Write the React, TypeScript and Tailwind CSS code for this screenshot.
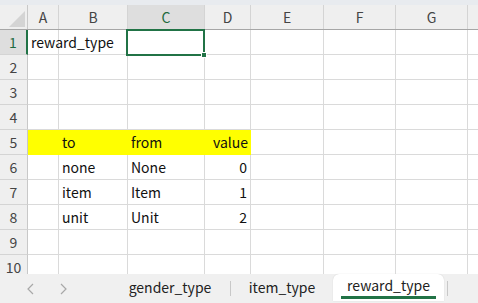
import React from 'react';

const font = { fontFamily: '"Noto Sans CJK JP", "Noto Sans", sans-serif' };

// column widths include the 1px right gridline
const cols = [
  { key: 'A', w: 'w-[31px]' },
  { key: 'B', w: 'w-[69px]' },
  { key: 'C', w: 'w-[77px]' },
  { key: 'D', w: 'w-[46px]' },
  { key: 'E', w: 'w-[73px]' },
  { key: 'F', w: 'w-[72px]' },
  { key: 'G', w: 'w-[72px]' },
];

type Cell = { text?: string; right?: boolean };

const rows: { n: number; yellow?: boolean; cells: Record<string, Cell> }[] = [
  { n: 1, cells: { A: { text: 'reward_type' } } },
  { n: 2, cells: {} },
  { n: 3, cells: {} },
  { n: 4, cells: {} },
  { n: 5, yellow: true, cells: { B: { text: 'to' }, C: { text: 'from' }, D: { text: 'value', right: true } } },
  { n: 6, cells: { B: { text: 'none' }, C: { text: 'None' }, D: { text: '0', right: true } } },
  { n: 7, cells: { B: { text: 'item' }, C: { text: 'Item' }, D: { text: '1', right: true } } },
  { n: 8, cells: { B: { text: 'unit' }, C: { text: 'Unit' }, D: { text: '2', right: true } } },
  { n: 9, cells: {} },
  { n: 10, cells: {} },
];

function ColumnHeader() {
  return (
    <div className="flex h-[25px] border-b border-[#a6a6a6] bg-[#efefef]">
      <div className="relative w-[28px] shrink-0 border-r border-[#c8c8c8]">
        <svg className="absolute left-0 top-0" width="27" height="24">
          <polygon points="25,6 25,22 9,22" fill="#d4d4d4" />
        </svg>
      </div>
      {cols.map((c) => (
        <div
          key={c.key}
          className={`${c.w} shrink-0 flex items-center justify-center border-r border-[#d4d4d4] text-[14px] ${
            c.key === 'C' ? 'bg-[#dedede] text-[#1e6b3f]' : 'text-[#444]'
          }`}
        >
          {c.key}
        </div>
      ))}
      <div className="flex-1" />
    </div>
  );
}

function Row({ row }: { row: (typeof rows)[number] }) {
  const sel = row.n === 1;
  return (
    <div className="flex h-[25px] shrink-0">
      <div
        className={`w-[28px] shrink-0 flex items-center justify-center text-[14px] border-b border-[#d4d4d4] ${
          sel ? 'bg-[#dedede] text-[#1e6b3f] border-r-2 border-r-[#217346]' : 'bg-[#efefef] text-[#444] border-r border-r-[#c8c8c8]'
        }`}
      >
        {row.n}
      </div>
      {cols.map((c, i) => {
        const cell = row.cells[c.key];
        const yellow = row.yellow && i < 4;
        return (
          <div
            key={c.key}
            className={`${c.w} shrink-0 flex items-center text-[14px] text-[#111] whitespace-nowrap ${
              yellow ? 'bg-[#ffff00]' : 'border-r border-b border-[#dadada]'
            } ${cell?.right ? 'justify-end pr-[3px]' : 'pl-[3px]'} ${c.key === 'A' ? 'overflow-visible' : 'overflow-hidden'}`}
          >
            {cell?.text}
          </div>
        );
      })}
      <div className="flex-1 border-b border-[#dadada]" />
    </div>
  );
}

export default function App() {
  return (
    <div className="w-[478px] h-[303px] flex flex-col bg-white overflow-hidden" style={font}>
      <div className="h-[5px] shrink-0 bg-[#e8ebef]" />
      <div className="relative flex-1 overflow-hidden">
        <ColumnHeader />
        {rows.map((r) => (
          <Row key={r.n} row={r} />
        ))}
        {/* active cell C1 */}
        <div className="absolute left-[126px] top-[24px] w-[79px] h-[27px] border-2 border-[#217346]" />
        <div className="absolute left-[201px] top-[47px] w-[6px] h-[6px] bg-[#217346] border border-white" />
      </div>
      <div className="h-[29px] shrink-0 flex items-stretch bg-[#f0f0f0] text-[14px] text-[#222]">
        <div className="w-[110px] flex items-center gap-[20px] pl-[25px] text-[#a8a8a8]">
          <svg width="12" height="14" viewBox="0 0 12 14">
            <path d="M8 2 L3 7 L8 12" fill="none" stroke="#a8a8a8" strokeWidth="1.2" />
          </svg>
          <svg width="12" height="14" viewBox="0 0 12 14">
            <path d="M4 2 L9 7 L4 12" fill="none" stroke="#a8a8a8" strokeWidth="1.2" />
          </svg>
        </div>
        <div className="w-[120px] flex items-center justify-center pb-[2px]">gender_type</div>
        <div className="w-px my-[7px] bg-[#c8c8c8]" />
        <div className="w-[102px] flex items-center justify-center pb-[2px]">item_type</div>
        <div className="w-[111px] flex flex-col items-center bg-white rounded-t-[6px] mb-[2px] shadow-[0_0_1px_rgba(0,0,0,0.2)]">
          <div className="h-[22px] flex items-center">reward_type</div>
          <div className="h-[3px] w-[95px] bg-[#217346]" />
        </div>
        <div className="w-px my-[7px] ml-[3px] bg-[#c8c8c8]" />
      </div>
    </div>
  );
}
